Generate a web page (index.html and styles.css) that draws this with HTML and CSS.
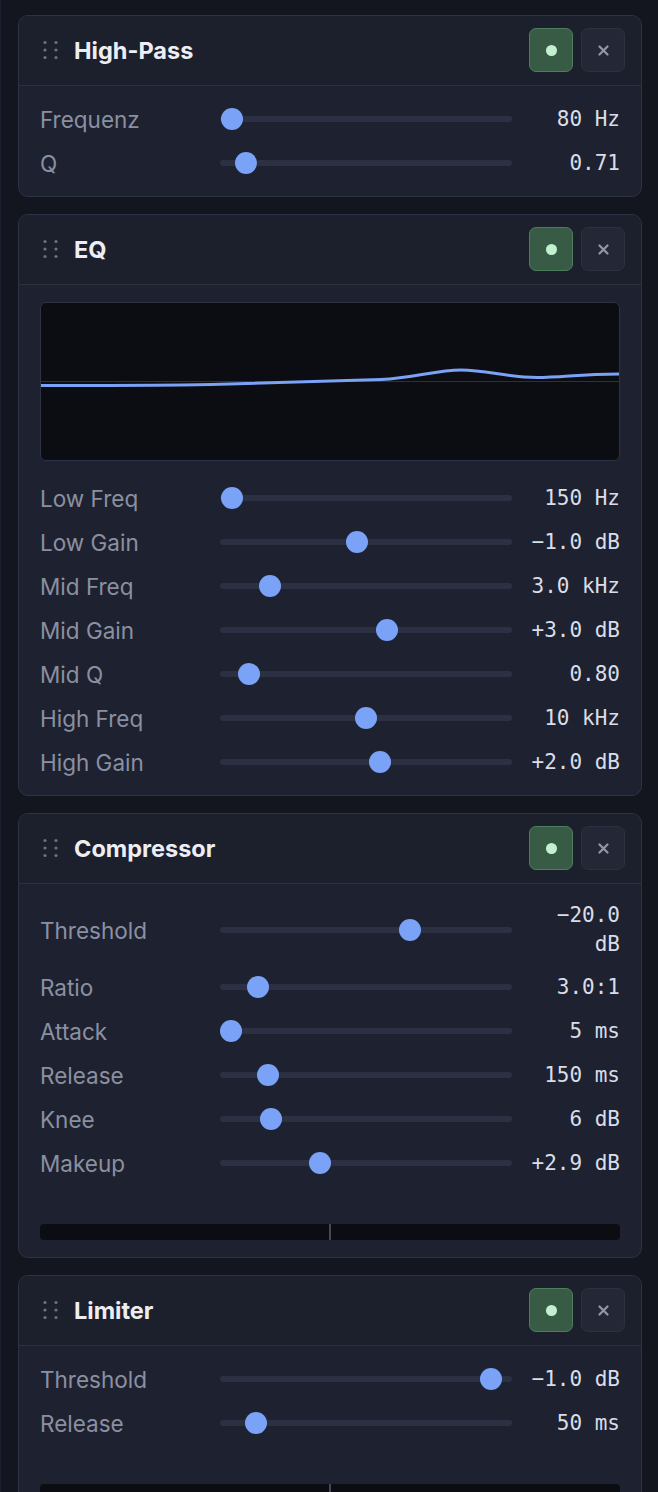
FILE: index.html
```html
<!DOCTYPE html>
<html lang="de">
<head>
<meta charset="utf-8">
<title>Effektkette</title>
<link rel="stylesheet" href="styles.css">
</head>
<body>
<main class="rack">

  <section class="card">
    <header class="card-head">
      <svg class="grip" width="20" height="24" viewBox="0 0 20 24"><g fill="#6c7183"><circle cx="5" cy="4.5" r="1.6"/><circle cx="16" cy="4.5" r="1.6"/><circle cx="5" cy="12" r="1.6"/><circle cx="16" cy="12" r="1.6"/><circle cx="5" cy="19.5" r="1.6"/><circle cx="16" cy="19.5" r="1.6"/></g></svg>
      <h2 class="title">High-Pass</h2>
      <button class="btn btn-on"><span class="dot"></span></button>
      <button class="btn btn-close"><svg width="11" height="11" viewBox="0 0 11 11"><path d="M1.5 1.5L9.5 9.5M9.5 1.5L1.5 9.5" stroke="#9297a8" stroke-width="2.2" stroke-linecap="round"/></svg></button>
    </header>
    <div class="card-body">
      <div class="param"><span class="label">Frequenz</span><input class="slider" type="range" min="0" max="1000" value="4"><span class="value">80 Hz</span></div>
      <div class="param"><span class="label">Q</span><input class="slider" type="range" min="0" max="1000" value="56"><span class="value">0.71</span></div>
    </div>
  </section>

  <section class="card">
    <header class="card-head">
      <svg class="grip" width="20" height="24" viewBox="0 0 20 24"><g fill="#6c7183"><circle cx="5" cy="4.5" r="1.6"/><circle cx="16" cy="4.5" r="1.6"/><circle cx="5" cy="12" r="1.6"/><circle cx="16" cy="12" r="1.6"/><circle cx="5" cy="19.5" r="1.6"/><circle cx="16" cy="19.5" r="1.6"/></g></svg>
      <h2 class="title">EQ</h2>
      <button class="btn btn-on"><span class="dot"></span></button>
      <button class="btn btn-close"><svg width="11" height="11" viewBox="0 0 11 11"><path d="M1.5 1.5L9.5 9.5M9.5 1.5L1.5 9.5" stroke="#9297a8" stroke-width="2.2" stroke-linecap="round"/></svg></button>
    </header>
    <div class="card-body">
      <div class="eq-graph">
        <svg width="578" height="157" viewBox="0 0 578 157">
          <line x1="0" y1="78.5" x2="578" y2="78.5" stroke="#2c3142" stroke-width="1"/>
          <path d="M0 82.5 C60 82.5 120 82.5 170 81.5 C230 79.8 290 78 340 76.5 C372 75.3 395 67 420 67 C446 67 466 74.5 496 74.5 C522 74.5 538 71 578 71" fill="none" stroke="#7aa2f7" stroke-width="3"/>
        </svg>
      </div>
      <div class="param"><span class="label">Low Freq</span><input class="slider" type="range" min="0" max="1000" value="2"><span class="value">150 Hz</span></div>
      <div class="param"><span class="label">Low Gain</span><input class="slider" type="range" min="0" max="1000" value="467"><span class="value">−1.0 dB</span></div>
      <div class="param"><span class="label">Mid Freq</span><input class="slider" type="range" min="0" max="1000" value="144"><span class="value">3.0 kHz</span></div>
      <div class="param"><span class="label">Mid Gain</span><input class="slider" type="range" min="0" max="1000" value="578"><span class="value">+3.0 dB</span></div>
      <div class="param"><span class="label">Mid Q</span><input class="slider" type="range" min="0" max="1000" value="67"><span class="value">0.80</span></div>
      <div class="param"><span class="label">High Freq</span><input class="slider" type="range" min="0" max="1000" value="500"><span class="value">10 kHz</span></div>
      <div class="param"><span class="label">High Gain</span><input class="slider" type="range" min="0" max="1000" value="552"><span class="value">+2.0 dB</span></div>
    </div>
  </section>

  <section class="card">
    <header class="card-head">
      <svg class="grip" width="20" height="24" viewBox="0 0 20 24"><g fill="#6c7183"><circle cx="5" cy="4.5" r="1.6"/><circle cx="16" cy="4.5" r="1.6"/><circle cx="5" cy="12" r="1.6"/><circle cx="16" cy="12" r="1.6"/><circle cx="5" cy="19.5" r="1.6"/><circle cx="16" cy="19.5" r="1.6"/></g></svg>
      <h2 class="title">Compressor</h2>
      <button class="btn btn-on"><span class="dot"></span></button>
      <button class="btn btn-close"><svg width="11" height="11" viewBox="0 0 11 11"><path d="M1.5 1.5L9.5 9.5M9.5 1.5L1.5 9.5" stroke="#9297a8" stroke-width="2.2" stroke-linecap="round"/></svg></button>
    </header>
    <div class="card-body">
      <div class="param"><span class="label">Threshold</span><input class="slider" type="range" min="0" max="1000" value="663"><span class="value">−20.0 dB</span></div>
      <div class="param"><span class="label">Ratio</span><input class="slider" type="range" min="0" max="1000" value="100"><span class="value">3.0:1</span></div>
      <div class="param"><span class="label">Attack</span><input class="slider" type="range" min="0" max="1000" value="0"><span class="value">5 ms</span></div>
      <div class="param"><span class="label">Release</span><input class="slider" type="range" min="0" max="1000" value="137"><span class="value">150 ms</span></div>
      <div class="param"><span class="label">Knee</span><input class="slider" type="range" min="0" max="1000" value="148"><span class="value">6 dB</span></div>
      <div class="param"><span class="label">Makeup</span><input class="slider" type="range" min="0" max="1000" value="331"><span class="value">+2.9 dB</span></div>
      <div class="meter"><span class="meter-mid"></span></div>
    </div>
  </section>

  <section class="card">
    <header class="card-head">
      <svg class="grip" width="20" height="24" viewBox="0 0 20 24"><g fill="#6c7183"><circle cx="5" cy="4.5" r="1.6"/><circle cx="16" cy="4.5" r="1.6"/><circle cx="5" cy="12" r="1.6"/><circle cx="16" cy="12" r="1.6"/><circle cx="5" cy="19.5" r="1.6"/><circle cx="16" cy="19.5" r="1.6"/></g></svg>
      <h2 class="title">Limiter</h2>
      <button class="btn btn-on"><span class="dot"></span></button>
      <button class="btn btn-close"><svg width="11" height="11" viewBox="0 0 11 11"><path d="M1.5 1.5L9.5 9.5M9.5 1.5L1.5 9.5" stroke="#9297a8" stroke-width="2.2" stroke-linecap="round"/></svg></button>
    </header>
    <div class="card-body">
      <div class="param"><span class="label">Threshold</span><input class="slider" type="range" min="0" max="1000" value="963"><span class="value">−1.0 dB</span></div>
      <div class="param"><span class="label">Release</span><input class="slider" type="range" min="0" max="1000" value="93"><span class="value">50 ms</span></div>
      <div class="meter"><span class="meter-mid"></span></div>
    </div>
  </section>

</main>
</body>
</html>
```

FILE: styles.css
```css
* { box-sizing: border-box; }

html, body {
  margin: 0;
  padding: 0;
  background: #14161f;
}

body {
  font-family: Inter, "Noto Sans", "Liberation Sans", sans-serif;
  color: #e6e8ef;
  border-left: 1px solid #1d2030;
  min-height: 1492px;
}

.rack {
  display: flex;
  flex-direction: column;
  gap: 17px;
  padding: 15px 16px 0 17px;
}

.card {
  width: 624px;
  background: #1e2230;
  border: 1px solid #2d3244;
  border-radius: 10px;
  overflow: hidden;
}

.card-head {
  height: 70px;
  display: flex;
  align-items: center;
  padding: 0 16px 1px 21px;
  border-bottom: 1px solid #2c3142;
  background: #1c202d;
}

.grip {
  flex: none;
  display: block;
}

.title {
  margin: 0 0 0 14px;
  flex: 1;
  font-size: 23.5px;
  font-weight: 700;
  color: #eceef4;
}

.btn {
  flex: none;
  width: 44px;
  height: 44px;
  border-radius: 7px;
  display: flex;
  align-items: center;
  justify-content: center;
  padding: 0;
  cursor: pointer;
}

.btn-on {
  background: #385b45;
  border: 1px solid #4e7d5d;
}

.btn-on .dot {
  width: 11px;
  height: 11px;
  border-radius: 50%;
  background: #c3f1d0;
}

.btn-close {
  margin-left: 8px;
  background: #242836;
  border: 1px solid #2c3040;
}

.btn-close svg { display: block; }

.card-body {
  display: flex;
  flex-direction: column;
  gap: 12px;
  padding: 17px 21px 17px 21px;
}

.eq-graph {
  height: 159px;
  border: 1px solid #2d3244;
  border-radius: 6px;
  background: #0b0d12;
  overflow: hidden;
  margin-bottom: 9px;
}

.eq-graph svg { display: block; }

.param {
  display: grid;
  grid-template-columns: 180px 292px 1fr;
  align-items: center;
  min-height: 32px;
}

.label {
  font-size: 22.5px;
  color: #8b90a1;
}

.value {
  padding-left: 14px;
  text-align: right;
  font-family: "DejaVu Sans Mono", "Liberation Mono", monospace;
  font-size: 21px;
  line-height: 29px;
  color: #d9dde8;
}

.slider {
  -webkit-appearance: none;
  appearance: none;
  margin: 0;
  width: 292px;
  height: 22px;
  background: transparent;
  display: block;
}

.slider::-webkit-slider-runnable-track {
  height: 6px;
  border-radius: 3px;
  background: #2b3042;
}

.slider::-webkit-slider-thumb {
  -webkit-appearance: none;
  appearance: none;
  width: 22px;
  height: 22px;
  border-radius: 50%;
  background: #7aa2f7;
  border: none;
  margin-top: -8px;
}

.meter {
  margin-top: 33px;
  height: 16px;
  border-radius: 4px;
  background: #0b0d12;
  display: flex;
  justify-content: center;
}

.meter-mid {
  width: 2px;
  height: 100%;
  background: #444959;
}
```
